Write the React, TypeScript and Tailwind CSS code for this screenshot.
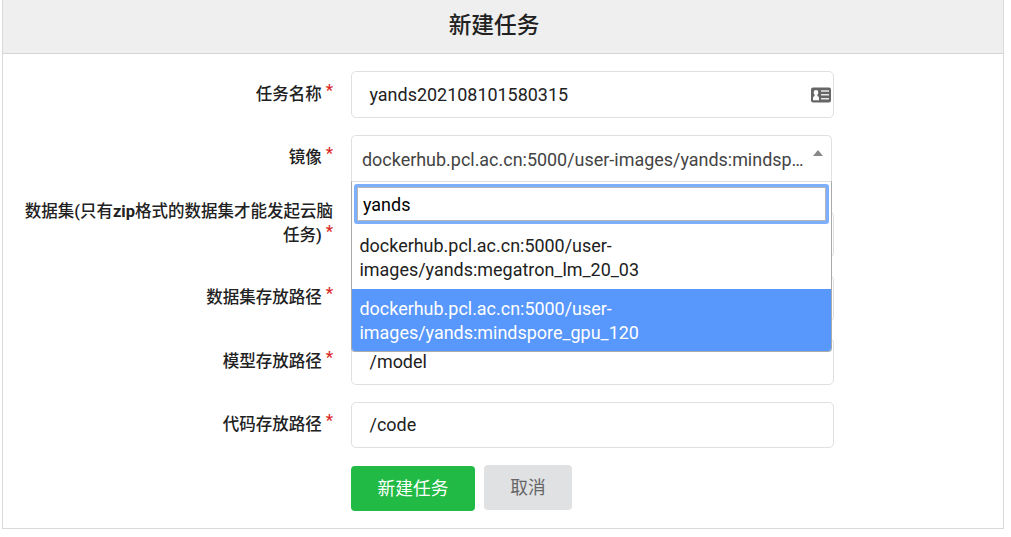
import type { ReactNode } from "react";

const INPUT =
  "flex items-center w-[483px] rounded-[5px] border border-[#dfe0e1] bg-white pl-[17.5px] text-[17.95px] text-[#212121]";

function Label({ children, className = "" }: { children: ReactNode; className?: string }) {
  return (
    <label
      className={`w-[330px] shrink-0 text-right text-[16.5px] leading-[24px] font-medium text-[#212121] ${className}`}
    >
      {children}
      <span className="relative -top-[4px] ml-[4px] leading-none font-medium text-[#db2828]">*</span>
    </label>
  );
}

function Row({ children, className = "" }: { children: ReactNode; className?: string }) {
  return <div className={`flex gap-[18px] ${className}`}>{children}</div>;
}

function CardIcon() {
  return (
    <svg width="20" height="16" viewBox="0 0 20 16" className="-mt-[2px] block">
      <rect x="0" y="0.5" width="20" height="15" rx="2" fill="#666666" />
      <path
        d="M2 13.3V10.8Q2 9.4 3.6 9V7.8Q2.7 7 2.7 5.3Q2.7 3 5 3Q7.3 3 7.3 5.3Q7.3 7 6.4 7.8V9Q8 9.4 8 10.8V13.3Z"
        fill="#ffffff"
      />
      <path d="M10 3.9H18M10 7.8H18M10 11.7H18" stroke="#e8e8e8" strokeWidth="1.5" />
    </svg>
  );
}

export default function App() {
  return (
    <div className="h-[537px] overflow-hidden bg-white pl-[2px] font-['Roboto','Noto_Sans_CJK_SC',sans-serif] text-[#212121]">
      <div className="h-[529px] w-[1002px] border border-t-0 border-[#d9d9da]">
        <h1 className="flex h-[54px] items-center justify-center border-b border-[#d4d4d5] bg-[#efefef] pr-[18px] text-[22.7px] leading-none font-medium">
          新建任务
        </h1>
        <form className="pt-[17px]">
          <Row className="h-[64px]">
            <Label className="pt-[12px]">任务名称</Label>
            <div className={`${INPUT} h-[47px] justify-between pt-[2px] pr-[2px]`}>
              <span>yands202108101580315</span>
              <CardIcon />
            </div>
          </Row>
          <Row className="h-[76px]">
            <Label className="pt-[11px]">镜像</Label>
            <div className="relative h-[47px] w-[481px]">
              <div className="flex h-[48px] justify-between rounded-t-[5px] border border-b-0 border-[#dfe0e1] bg-white pt-[12px] pr-[8px] pl-[10px] text-[17.95px] leading-[24px] text-[#444444]">
                <span className="w-[445px] overflow-hidden text-ellipsis whitespace-nowrap">
                  dockerhub.pcl.ac.cn:5000/user-images/yands:mindspore_gpu_120
                </span>
                <svg width="10" height="6" viewBox="0 0 10 6" className="mt-[2px]">
                  <path d="M0 6L5 0L10 6Z" fill="#888888" />
                </svg>
              </div>
              <div className="absolute top-[46px] left-0 z-10 w-[481px] overflow-hidden rounded-b-[4px] border border-[#aaaaaa] border-t-[#dddddd] bg-white text-[17.95px] leading-[24px]">
                <div className="px-[2px] pt-[2px] pb-[2px]">
                  <div className="h-[40px] rounded-[3px] border-[3px] border-[#7cafff] bg-white">
                    <div className="flex h-full items-center border border-[#b5b5b5] pt-px pl-[5px] text-black">
                      yands
                    </div>
                  </div>
                </div>
                <div className="h-[63px] px-[7.5px] pt-[8px]">
                  dockerhub.pcl.ac.cn:5000/user-
                  <br />
                  images/yands:megatron_lm_20_03
                </div>
                <div className="h-[62px] bg-[#5897fb] px-[7.5px] pt-[8px] text-white">
                  dockerhub.pcl.ac.cn:5000/user-
                  <br />
                  images/yands:mindspore_gpu_120
                </div>
              </div>
            </div>
          </Row>
          <Row className="h-[64px]">
            <Label className="-mt-[11px] pl-[15px]">
              数据集(只有<span className="font-bold">zip</span>格式的数据集才能发起云脑任务)
            </Label>
            <div className={`${INPUT} h-[47px]`} />
          </Row>
          <Row className="h-[63px]">
            <Label className="pt-[11px]">数据集存放路径</Label>
            <div className={`${INPUT} h-[47px]`} />
          </Row>
          <Row className="h-[64px]">
            <Label className="pt-[12px]">模型存放路径</Label>
            <div className={`${INPUT} h-[47px] pt-[2px]`}>/model</div>
          </Row>
          <Row className="h-[64px]">
            <Label className="pt-[11px]">代码存放路径</Label>
            <div className={`${INPUT} h-[46px] pt-px`}>/code</div>
          </Row>
          <div className="flex gap-[9px] pl-[348px] text-[17.7px]">
            <button type="button" className="h-[45px] w-[124px] rounded-[4px] bg-[#21ba45] pt-[2px] text-white">
              新建任务
            </button>
            <button
              type="button"
              className="-mt-px h-[45px] w-[88px] rounded-[4px] bg-[#e0e1e2] pt-[2px] text-[#666666]"
            >
              取消
            </button>
          </div>
        </form>
      </div>
    </div>
  );
}
